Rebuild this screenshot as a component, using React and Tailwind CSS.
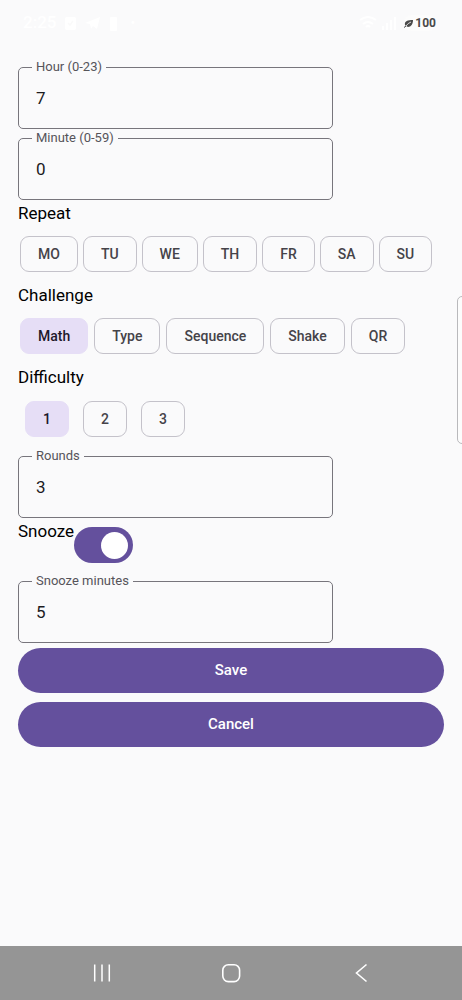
import React, { useState } from 'react';

const DAYS = ['MO', 'TU', 'WE', 'TH', 'FR', 'SA', 'SU'];
const CHALLENGES = ['Math', 'Type', 'Sequence', 'Shake', 'QR'];
const LEVELS = ['1', '2', '3'];

const StatusBar = () => (
  <header className="flex h-[46px] items-center justify-between pl-[23px] pr-[26px] text-white">
    <div className="flex items-center gap-2">
      <span className="text-[17px] font-medium">2:25</span>
      <svg width="13" height="15" viewBox="0 0 13 15" fill="none">
        <rect x="1" y="1" width="11" height="13" rx="2" fill="currentColor" />
        <path d="M4 7l2 2 3-4" stroke="#fafafa" strokeWidth="1.5" />
      </svg>
      <svg width="16" height="14" viewBox="0 0 16 14" fill="currentColor">
        <path d="M0 7L15 1l-3 12-4-3-2 3-1-5z" />
      </svg>
      <svg width="9" height="15" viewBox="0 0 9 15" fill="currentColor">
        <rect x="1" y="1" width="7" height="14" rx="1" />
      </svg>
      <span className="ml-1 text-sm">•</span>
    </div>

    <div className="flex items-center gap-1">
      <svg width="18" height="14" viewBox="0 0 18 14" fill="none" stroke="currentColor" strokeWidth="2">
        <path d="M1 4q8-6 16 0M4 8q5-4 10 0M7 11q2-2 4 0" />
      </svg>
      <svg width="15" height="14" viewBox="0 0 15 14" fill="currentColor">
        <path d="M1 10h2v4H1zM5 7h2v7H5zM9 4h2v10H9zM13 1h2v13h-2z" />
      </svg>
      <div className="ml-1 flex items-center gap-[2px] rounded-full bg-[#fcfcfc] text-[#4a4a4a]">
        <svg width="9" height="9" viewBox="0 0 9 9">
          <path d="M1 6C0 2 4 1 9 1c0 4-2 7-5 7L2 7z" fill="currentColor" />
          <path d="M0 8.5L2 7" stroke="currentColor" strokeWidth="1" />
          <path d="M2 7Q4 4 7 3" stroke="#fcfcfc" strokeWidth="0.8" fill="none" />
        </svg>
        <span className="text-[12px] font-bold leading-4">100</span>
      </div>
    </div>
  </header>
);

const Field = ({ id, label, value, onChange }) => (
  <fieldset className="w-[74%] rounded-[5px] border border-[#77757c] pl-[13px]">
    <legend className="h-[18px] px-1 text-[13px] leading-[18px] text-[#56545a]">
      <label htmlFor={id}>{label}</label>
    </legend>
    <input
      id={id}
      name={id}
      type="text"
      inputMode="numeric"
      value={value}
      onChange={onChange}
      className="block h-[52px] w-full bg-transparent px-1 pb-2 text-[17px] text-[#1c1b1f] outline-none"
    />
  </fieldset>
);

const Chip = ({ label, selected, onClick }) => (
  <button
    type="button"
    aria-pressed={selected}
    onClick={onClick}
    className={`h-9 rounded-[9px] border px-[17px] text-sm font-medium ${
      selected
        ? 'border-[#e6def6] bg-[#e6def6] text-[#1d192b]'
        : 'border-[#c4c2ca] text-[#454349]'
    }`}
  >
    {label}
  </button>
);

const Heading = ({ children }) => (
  <h2 className="text-[17px] leading-[26px] text-black">{children}</h2>
);

const NavBar = () => (
  <nav className="flex h-[54px] items-center justify-around bg-[#959595] px-[37px] text-white">
    <button type="button" aria-label="Recent apps">
      <svg width="20" height="20" viewBox="0 0 20 20" fill="none" stroke="currentColor" strokeWidth="1.5">
        <path d="M2.7 1.5v17M10 1.5v17M17.3 1.5v17" />
      </svg>
    </button>
    <button type="button" aria-label="Home">
      <svg width="20" height="20" viewBox="0 0 20 20" fill="none" stroke="currentColor" strokeWidth="1.6">
        <rect x="1.8" y="1.8" width="16.8" height="16.8" rx="5.5" />
      </svg>
    </button>
    <button type="button" aria-label="Back">
      <svg width="20" height="20" viewBox="0 0 20 20" fill="none" stroke="currentColor" strokeWidth="1.6">
        <path d="M16.5 1.5L6.5 10l10 8.5" />
      </svg>
    </button>
  </nav>
);

const App = () => {
  const [form, setForm] = useState({ hour: '7', minute: '0', rounds: '3', snoozeMinutes: '5' });
  const [days, setDays] = useState([]);
  const [challenge, setChallenge] = useState('Math');
  const [level, setLevel] = useState('1');
  const [snooze, setSnooze] = useState(true);

  const handleChange = (e) => {
    const { name, value } = e.target;
    setForm((prev) => ({ ...prev, [name]: value }));
  };

  const toggleDay = (day) => {
    setDays((prev) => (prev.includes(day) ? prev.filter((d) => d !== day) : [...prev, day]));
  };

  return (
    <div className="relative flex min-h-screen flex-col overflow-hidden bg-[#fafafb] font-[Roboto,sans-serif]">
      <StatusBar />

      <form className="flex-1 px-[18px] pt-3" onSubmit={(e) => e.preventDefault()}>
        <Field id="hour" label="Hour (0-23)" value={form.hour} onChange={handleChange} />
        <Field id="minute" label="Minute (0-59)" value={form.minute} onChange={handleChange} />

        <Heading>Repeat</Heading>
        <div className="flex gap-[5px] py-[10px] pl-[2px]">
          {DAYS.map((day) => (
            <Chip key={day} label={day} selected={days.includes(day)} onClick={() => toggleDay(day)} />
          ))}
        </div>

        <Heading>Challenge</Heading>
        <div className="flex gap-[6px] py-[10px] pl-[2px]">
          {CHALLENGES.map((c) => (
            <Chip key={c} label={c} selected={challenge === c} onClick={() => setChallenge(c)} />
          ))}
        </div>

        <Heading>Difficulty</Heading>
        <div className="flex gap-[14px] pt-[11px] pb-[10px] pl-[7px]">
          {LEVELS.map((l) => (
            <Chip key={l} label={l} selected={level === l} onClick={() => setLevel(l)} />
          ))}
        </div>

        <Field id="rounds" label="Rounds" value={form.rounds} onChange={handleChange} />

        <div className="flex h-[54px]">
          <label htmlFor="snooze" className="text-[17px] leading-[26px] text-black">
            Snooze
          </label>
          <input
            id="snooze"
            type="checkbox"
            role="switch"
            checked={snooze}
            onChange={(e) => setSnooze(e.target.checked)}
            className="flex h-9 w-[59px] appearance-none items-center self-center rounded-full bg-[#cac4d0] px-[5px] before:size-[27px] before:rounded-full before:bg-white checked:justify-end checked:bg-[#64509d]"
          />
        </div>

        <Field
          id="snoozeMinutes"
          label="Snooze minutes"
          value={form.snoozeMinutes}
          onChange={handleChange}
        />

        <div className="flex flex-col gap-[9px] pt-[5px]">
          <button type="submit" className="h-[45px] rounded-full bg-[#64509d] text-[15px] font-medium text-white">
            Save
          </button>
          <button type="button" className="h-[45px] rounded-full bg-[#64509d] text-[15px] font-medium text-white">
            Cancel
          </button>
        </div>
      </form>

      {/* edge panel handle */}
      <div className="absolute -right-2 top-[296px] h-[148px] w-[13px] rounded-[5px] border border-[#b9b9bc] bg-[#fcfcfc]" />

      <NavBar />
    </div>
  );
};

export default App;
